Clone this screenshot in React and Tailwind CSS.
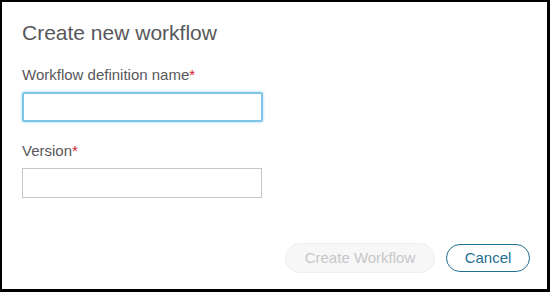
import React from "react";

const Label = ({ children }) => (
  <label className="block text-[15px] leading-[18px] text-[#58585b]">
    {children}
    <span className="text-[#cf2030]">*</span>
  </label>
);

const App = () => {
  return (
    <div
      className="w-[550px] h-[292px] bg-white border-l-2 border-t-2 border-r-[3px] border-b-[3px] border-black flex flex-col"
      style={{ fontFamily: '"Liberation Sans", Arial, sans-serif' }}
    >
      <div className="pl-5 pt-[19px] flex-1">
        <h1 className="text-[21px] leading-6 text-[#58585b]">Create new workflow</h1>

        <div className="mt-[21px]">
          <Label>Workflow definition name</Label>
          <input
            type="text"
            className="mt-[8px] block w-[241px] h-[30px] rounded-[2px] border-2 border-[#7fc5e6] shadow-[0_0_3px_#9fd3ee] outline-none"
          />
        </div>

        <div className="mt-[20px]">
          <Label>Version</Label>
          <input
            type="text"
            className="mt-[8px] block w-[240px] h-[30px] border border-[#c6c7ca] outline-none"
          />
        </div>
      </div>

      <div className="flex justify-end items-center gap-[11px] pr-[17px] pb-[16px]">
        <button className="h-[30px] w-[150px] rounded-full bg-[#f7f7f7] border border-[#efefef] text-[15px] text-[#c6c7ca]">
          Create Workflow
        </button>
        <button className="h-[28px] w-[84px] rounded-full border border-[#1f6f94] text-[15px] text-[#1f6f94] bg-white">
          Cancel
        </button>
      </div>
    </div>
  );
};

export default App;
